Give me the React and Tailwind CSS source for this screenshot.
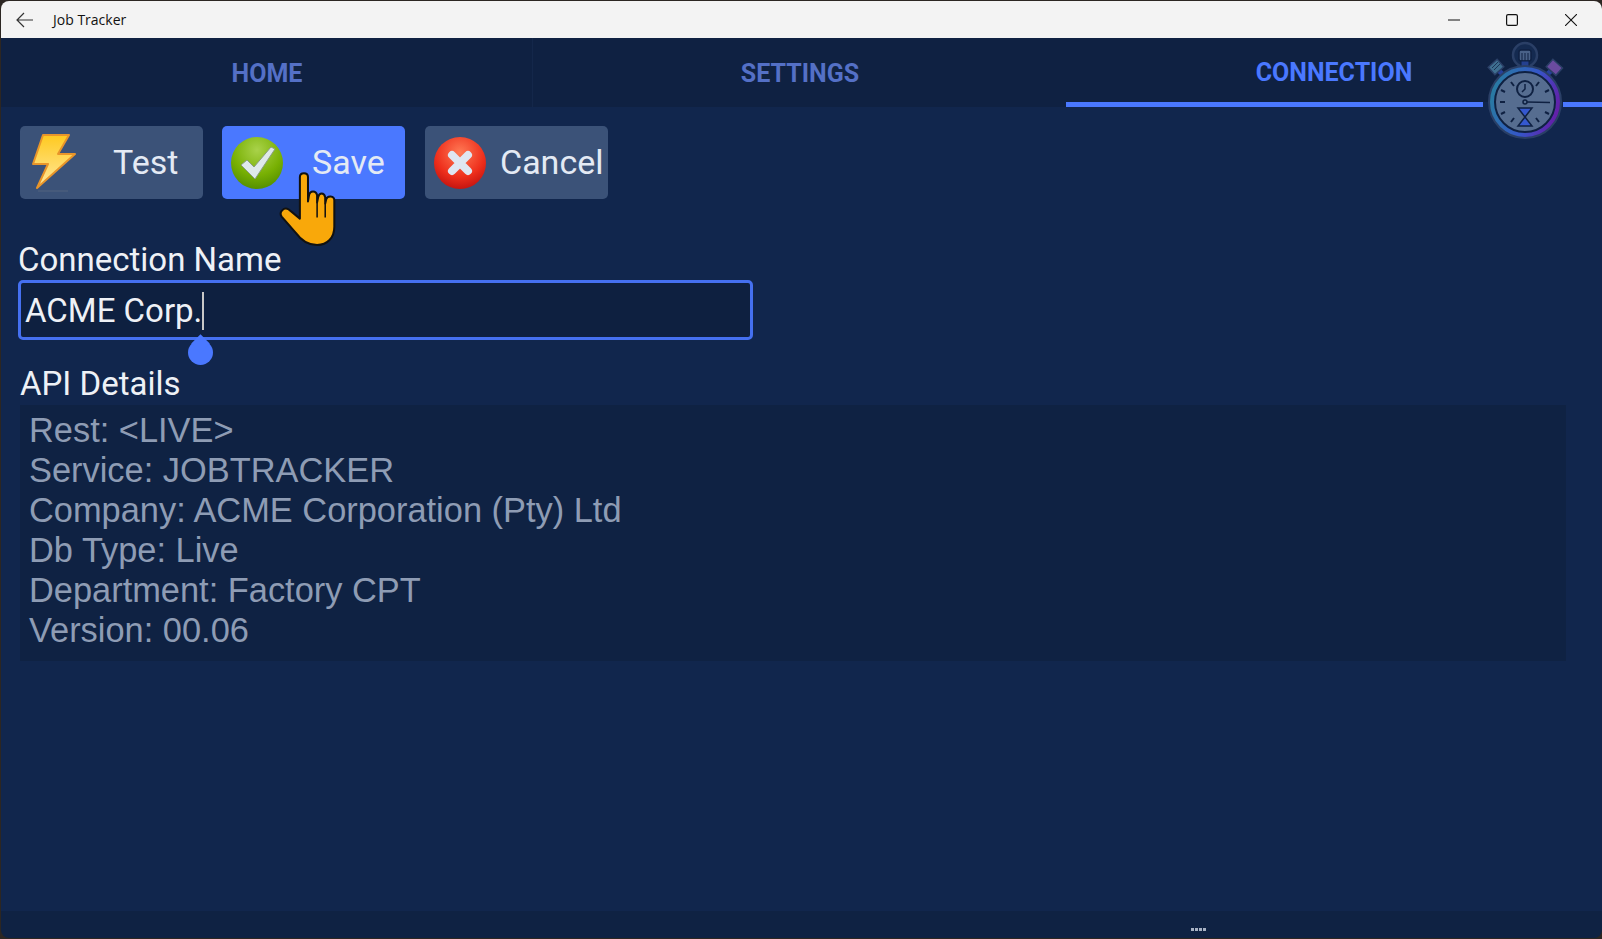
import React from 'react';

const BoltIcon = () => (
    <svg width="46" height="60" viewBox="0 0 46 60">
        <defs>
            <linearGradient id="bolt" x1="0" y1="0" x2="0" y2="1">
                <stop offset="0" stopColor="#ffc91f" />
                <stop offset="1" stopColor="#ffe9a0" />
            </linearGradient>
        </defs>
        <path d="M11 2 L37 2 L26 21 L43 21 L5 55 L16 31 L1 31 Z" fill="url(#bolt)" stroke="#e8952a" strokeWidth="2" strokeLinejoin="round" />
        <path d="M6 58 H36" stroke="#52627f" strokeWidth="1" />
    </svg>
);

const CheckIcon = () => (
    <svg width="54" height="54" viewBox="0 0 54 54">
        <defs>
            <radialGradient id="green" cx="0.5" cy="0.25" r="0.8">
                <stop offset="0" stopColor="#a9d24a" />
                <stop offset="0.6" stopColor="#78b003" />
                <stop offset="1" stopColor="#4f8a00" />
            </radialGradient>
        </defs>
        <circle cx="27" cy="27" r="26" fill="url(#green)" />
        <path d="M11 29 L17 24 L24 31 L41 11 L45 13 L25 43 Z" fill="#dfe9ea" stroke="#8a9e80" strokeWidth="1" strokeLinejoin="round" />
    </svg>
);

const CrossIcon = () => (
    <svg width="54" height="54" viewBox="0 0 54 54">
        <defs>
            <radialGradient id="red" cx="0.5" cy="0.3" r="0.78">
                <stop offset="0" stopColor="#ff7a55" />
                <stop offset="0.6" stopColor="#ee2f1c" />
                <stop offset="1" stopColor="#b80c0c" />
            </radialGradient>
        </defs>
        <circle cx="27" cy="27" r="26" fill="url(#red)" />
        <path d="M19 19 L35 35 M35 19 L19 35" stroke="#dfe6f2" strokeWidth="8" strokeLinecap="round" />
    </svg>
);

const HandCursor = () => (
    <svg width="62" height="77" viewBox="0 0 60 76">
        <path
            d="M21 6 C21 1 29 1 29 6 L29 30 L30 24 C31 19 37 19 38 24 L38 31 L39 26 C40 21 45 21 46 26 L46 32 L47 28 C48 24 55 24 55 29 L55 55 C55 66 48 73 38 73 C28 73 22 68 17 61 L3 45 C0 41 5 35 10 38 L21 47 Z"
            fill="#f9a80a"
            stroke="#111"
            strokeWidth="2"
            strokeLinejoin="round"
        />
        <path d="M38 31 V46 M46 32 V46" stroke="#111" strokeWidth="1.5" />
    </svg>
);

const Stopwatch = () => (
    <svg width="80" height="100" viewBox="0 0 80 100" fill="none">
        <defs>
            <linearGradient id="ring" x1="0" y1="0.2" x2="1" y2="0.5">
                <stop offset="0" stopColor="#27809c" />
                <stop offset="0.6" stopColor="#3556c8" />
                <stop offset="1" stopColor="#641ea8" />
            </linearGradient>
        </defs>
        {/* crown */}
        <circle cx="40" cy="15" r="12" stroke="#2a3f66" strokeWidth="2.5" fill="#142a50" />
        <rect x="34" y="10" width="12" height="11" rx="2" fill="#4a6288" stroke="#0f2142" strokeWidth="1.5" />
        <path d="M37 13 V21 M40 13 V21 M43 13 V21" stroke="#0f2142" strokeWidth="1" />
        <rect x="36" y="21" width="8" height="6" fill="#24408f" stroke="#0f2142" />
        {/* side pushers */}
        <path d="M13 30 L22 38" stroke="#26409a" strokeWidth="5" />
        <rect x="5" y="22" width="12" height="10" transform="rotate(-42 11 27)" fill="#3f6f90" stroke="#2a3f66" strokeWidth="1.5" />
        <path d="M7 28 L13 22 M9 30 L15 24" stroke="#1c3558" strokeWidth="1" />
        <path d="M67 30 L58 38" stroke="#26409a" strokeWidth="5" />
        <rect x="63" y="22" width="13" height="10" transform="rotate(42 69 27)" fill="#6b4ba0" stroke="#2a3f66" strokeWidth="1.5" />
        {/* body and face */}
        <circle cx="40" cy="62" r="36" fill="url(#ring)" stroke="#2a3f66" strokeWidth="2" />
        <circle cx="40" cy="62" r="30" fill="#566d90" stroke="#0f2142" strokeWidth="2" />
        <circle cx="40" cy="49" r="8" stroke="#0f2142" strokeWidth="2" />
        <path d="M40 44 V49 L37 52" stroke="#0f2142" strokeWidth="1.5" />
        <circle cx="40" cy="62" r="2" stroke="#0f2142" strokeWidth="1.5" />
        <path d="M42 62 L65 62.5" stroke="#0f2142" strokeWidth="1.5" />
        <path d="M33 68 H47 L40 77 L47 86 H33 L40 77 Z" fill="#3558cf" stroke="#0f2142" strokeWidth="1.5" />
        <path d="M26 42 L29 46 M54 42 L51 46 M15 62 H20 M16 50 L20 52 M64 50 L60 52 M16 74 L20 72 M64 74 L60 72 M26 82 L29 78 M54 82 L51 78" stroke="#0f2142" strokeWidth="2" />
    </svg>
);

const ActionButton = ({ icon, label, active, labelClass }) => (
    <button className={`relative flex items-center w-[183px] h-[73px] rounded-[5px] ${active ? 'bg-[#4a78ff]' : 'bg-[#3b5278]'}`}>
        <span className="flex items-center justify-center w-[70px]">{icon}</span>
        <span className={`text-[34px] leading-[40px] pb-[1px] text-[#e4eaf4] ${labelClass}`}>{label}</span>
    </button>
);

const App = () => {
    const tabs = ['HOME', 'SETTINGS', 'CONNECTION'];
    const apiLines = [
        'Rest: <LIVE>',
        'Service: JOBTRACKER',
        'Company: ACME Corporation (Pty) Ltd',
        'Db Type: Live',
        'Department: Factory CPT',
        'Version: 00.06',
    ];

    return (
        <div className="w-[1602px] h-[939px] bg-[#2c2622] overflow-hidden font-['Roboto',sans-serif]">
            <div className="relative flex flex-col w-full h-full pl-[1px] pb-[1px] pt-[1px] rounded-[8px] overflow-hidden">
                {/* Title bar */}
                <div className="flex items-center h-[37px] bg-[#f3f3f3] rounded-t-[8px] text-[#111]">
                    <svg className="ml-[15px]" width="18" height="16" viewBox="0 0 18 16" fill="none" stroke="#333" strokeWidth="1.2">
                        <path d="M8 1 L1 8 L8 15 M1 8 H17" />
                    </svg>
                    <span className="ml-[19px] text-[14px] font-['Open_Sans',sans-serif]">Job Tracker</span>
                    <div className="ml-auto flex items-center pr-[2px]">
                        <span className="flex justify-center w-[59px]">
                            <svg width="12" height="12" viewBox="0 0 12 12" stroke="#111" strokeWidth="1"><path d="M0 6 H12" /></svg>
                        </span>
                        <span className="flex justify-center w-[58px]">
                            <svg width="12" height="12" viewBox="0 0 12 12" fill="none" stroke="#111" strokeWidth="1.2"><rect x="0.6" y="0.6" width="10.8" height="10.8" rx="1.5" /></svg>
                        </span>
                        <span className="flex justify-center w-[59px]">
                            <svg width="12" height="12" viewBox="0 0 12 12" stroke="#111" strokeWidth="1.1"><path d="M0 0 L12 12 M12 0 L0 12" /></svg>
                        </span>
                    </div>
                </div>

                {/* Tabs */}
                <div className="relative grid grid-cols-[532px_533px_1fr] h-[69px] bg-[#0f2142]">
                    {tabs.map((tab, i) => (
                        <div
                            key={tab}
                            className={`flex items-center justify-center text-[25px] font-bold ${i === 0 ? 'border-r border-[#14274a]' : ''} ${i === 2 ? 'border-b-[5px] border-[#4a78ff] pt-[5px] text-[#4a78ff]' : 'pt-[3px] pb-[1px] pl-[1px] text-[#5470c6]'}`}
                        >
                            {tab}
                        </div>
                    ))}
                    <div className="absolute left-[1482px] bottom-0 w-[80px] h-[5px] bg-[#11264d]" />
                    <div className="absolute left-[1484px] top-[2px]">
                        <Stopwatch />
                    </div>
                </div>

                {/* Connection form */}
                <div className="flex-1 flex flex-col bg-[#11264d] pl-[19px] pr-[36px] pt-[19px]">
                    <div className="flex gap-[19px]">
                        <ActionButton icon={<BoltIcon />} label="Test" labelClass="pl-[23px]" />
                        <div className="relative">
                            <ActionButton icon={<CheckIcon />} label="Save" active labelClass="pl-[20px]" />
                            <div className="absolute left-[56px] top-[45px]">
                                <HandCursor />
                            </div>
                        </div>
                        <div className="ml-[1px]">
                            <ActionButton icon={<CrossIcon />} label="Cancel" labelClass="ml-[5px] text-[33px]" />
                        </div>
                    </div>

                    <label className="mt-[39px] -ml-[2px] text-[33px] leading-[44px] text-[#eef1f6]">Connection Name</label>
                    <div className="relative flex items-center w-[735px] h-[60px] -ml-[2px] -mt-[2px] pl-[4px] pt-[2px] bg-[#0e2040] border-[3px] border-[#4570f0] rounded-[5px]">
                        <span className="text-[33px] text-[#eef1f6]">ACME Corp.</span>
                        <span className="w-[2px] h-[38px] bg-[#c8c8c8]" />
                        <div className="absolute left-[167px] top-[57px] w-[25px] h-[25px] rounded-full bg-[#4a78ff]" />
                        <div className="absolute left-[173px] top-[54px] w-[13px] h-[13px] rotate-45 bg-[#4a78ff]" />
                    </div>

                    <label className="mt-[22px] text-[33px] leading-[44px] text-[#eef1f6]">API Details</label>
                    <div className="h-[256px] -mt-[1px] pl-[9px] pt-[5px] bg-[#0f2243]">
                        {apiLines.map((line) => (
                            <div key={line} className="font-['Liberation_Sans',sans-serif] text-[34.4px] leading-[40px] text-[#8e9cb4]">{line}</div>
                        ))}
                    </div>
                </div>

                {/* Bottom bar */}
                <div className="relative h-[27px] bg-[#0f2243] rounded-b-[8px]">
                    <div className="absolute left-[1190px] top-[17px] flex gap-[1px]">
                        <span className="w-[3px] h-[3px] bg-[#a8b2c4]" />
                        <span className="w-[3px] h-[3px] bg-[#a8b2c4]" />
                        <span className="w-[3px] h-[3px] bg-[#a8b2c4]" />
                        <span className="w-[3px] h-[3px] bg-[#a8b2c4]" />
                    </div>
                </div>
            </div>
        </div>
    );
};

export default App;
